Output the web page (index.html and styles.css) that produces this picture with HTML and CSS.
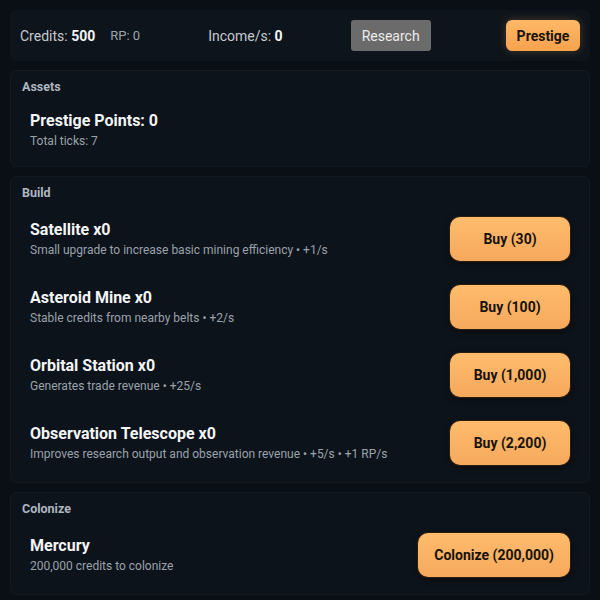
FILE: index.html
```html
<!doctype html>
<html lang="en">
<head>
    <meta charset="UTF-8">
    <meta name="viewport" content="width=device-width, initial-scale=1.0">
    <title>Space Idle</title>
    <link rel="stylesheet" href="styles.css">
</head>
<body>
    <div class="app">
        <div class="topbar">
            <div class="stats">
                <span class="stat">Credits: <b>500</b></span>
                <span class="stat small">RP: 0</span>
            </div>
            <span class="stat">Income/s: <b>0</b></span>
            <button class="btn-research">Research</button>
            <button class="btn-prestige">Prestige</button>
        </div>

        <div class="panel">
            <div class="panel-title">Assets</div>
            <div class="row">
                <div class="info">
                    <div class="name">Prestige Points: 0</div>
                    <div class="desc">Total ticks: 7</div>
                </div>
            </div>
        </div>

        <div class="panel">
            <div class="panel-title">Build</div>
            <div class="row">
                <div class="info">
                    <div class="name">Satellite x0</div>
                    <div class="desc">Small upgrade to increase basic mining efficiency • +1/s</div>
                </div>
                <button class="btn-buy">Buy (30)</button>
            </div>
            <div class="row">
                <div class="info">
                    <div class="name">Asteroid Mine x0</div>
                    <div class="desc">Stable credits from nearby belts • +2/s</div>
                </div>
                <button class="btn-buy">Buy (100)</button>
            </div>
            <div class="row">
                <div class="info">
                    <div class="name">Orbital Station x0</div>
                    <div class="desc">Generates trade revenue • +25/s</div>
                </div>
                <button class="btn-buy">Buy (1,000)</button>
            </div>
            <div class="row">
                <div class="info">
                    <div class="name">Observation Telescope x0</div>
                    <div class="desc">Improves research output and observation revenue • +5/s • +1 RP/s</div>
                </div>
                <button class="btn-buy">Buy (2,200)</button>
            </div>
        </div>

        <div class="panel">
            <div class="panel-title">Colonize</div>
            <div class="row">
                <div class="info">
                    <div class="name">Mercury</div>
                    <div class="desc">200,000 credits to colonize</div>
                </div>
                <button class="btn-buy wide">Colonize (200,000)</button>
            </div>
        </div>
    </div>
</body>
</html>
```

FILE: styles.css
```css
*{
    margin: 0;
    padding: 0;
    box-sizing: border-box;
}
body{
    background-color: #0a0f15;
    font-family: Roboto, "Liberation Sans", sans-serif;
    color: #eef1f4;
}
.app{
    padding: 10px;
    display: flex;
    flex-direction: column;
    gap: 9px;
}
.topbar{
    display: flex;
    align-items: center;
    gap: 68px;
    padding: 10px;
    background-color: #0e141b;
    border-radius: 6px;
}
.stats{
    display: flex;
    align-items: center;
    gap: 15px;
}
.stat{
    font-size: 14px;
    color: #c3cad2;
}
.stat b{
    color: #f2f4f6;
}
.stat.small{
    font-size: 13px;
    color: #9ba4ae;
}
button{
    font-family: inherit;
    border: none;
    cursor: pointer;
}
.btn-research{
    width: 80px;
    height: 31px;
    background-color: #6b6b6b;
    color: #ececec;
    font-size: 14px;
    border-radius: 3px;
}
.btn-prestige{
    margin-left: auto;
    width: 74px;
    height: 31px;
    background: linear-gradient(#ffb868, #f7a24c);
    color: #1b1309;
    font-size: 14px;
    font-weight: bold;
    border-radius: 6px;
    box-shadow: 0 0 8px rgba(255, 170, 80, 0.25);
}
.panel{
    padding: 8px 11px 5px;
    background-color: #0d131a;
    border: 1px solid #131a22;
    border-radius: 6px;
}
.panel-title{
    font-size: 12.5px;
    line-height: 15px;
    font-weight: bold;
    color: #aeb7c1;
    margin-bottom: 5px;
}
.row{
    display: flex;
    align-items: center;
    justify-content: space-between;
    padding: 12px 8px;
}
.info{
    display: flex;
    flex-direction: column;
    gap: 4px;
}
.name{
    font-size: 16px;
    line-height: 19px;
    font-weight: bold;
    color: #f3f5f7;
}
.desc{
    font-size: 12px;
    line-height: 15px;
    color: #9aa2ac;
}
.btn-buy{
    width: 120px;
    height: 44px;
    background: linear-gradient(#ffbb6c, #f6a95c);
    color: #17120c;
    font-size: 14px;
    font-weight: bold;
    border-radius: 10px;
    box-shadow: 0 0 0 1px #2a1e10, 0 2px 6px rgba(0, 0, 0, 0.5);
}
.btn-buy.wide{
    width: auto;
    padding: 0 16px;
}
```
